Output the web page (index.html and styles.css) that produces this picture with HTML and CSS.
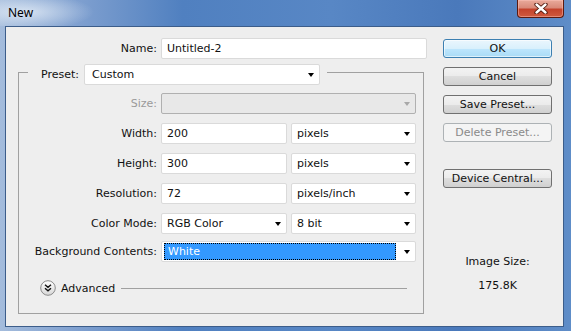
FILE: index.html
```html
<!DOCTYPE html>
<html>
<head>
	<title>New</title>
	<link rel="stylesheet" href="styles.css">
</head>
<body>
	<div class="window">
		<div class="titlebar">
			<span class="title">New</span>
			<span class="close">
				<svg width="14" height="11" viewBox="0 0 14 11">
					<path d="M2.5 1.5 L11.5 9.5 M11.5 1.5 L2.5 9.5" stroke="#4a1408" stroke-width="4.2" stroke-linecap="round"/>
					<path d="M2.5 1.5 L11.5 9.5 M11.5 1.5 L2.5 9.5" stroke="#fff" stroke-width="2.4" stroke-linecap="round"/>
				</svg>
			</span>
		</div>

		<div class="client">
			<div class="main">
				<div class="name_row">
					<label class="lbl name_lbl">Name:</label>
					<div class="field name_field">Untitled-2</div>
				</div>

				<fieldset class="group">
					<legend class="preset">
						<span>Preset:</span>
						<div class="select preset_select"><span>Custom</span><i class="arrow"></i></div>
					</legend>

					<div class="grid">
						<span class="lbl off">Size:</span>
						<div class="select wide disabled"><span></span><i class="arrow"></i></div>

						<span class="lbl">Width:</span>
						<div class="field">200</div>
						<div class="select"><span>pixels</span><i class="arrow"></i></div>

						<span class="lbl">Height:</span>
						<div class="field">300</div>
						<div class="select"><span>pixels</span><i class="arrow"></i></div>

						<span class="lbl">Resolution:</span>
						<div class="field">72</div>
						<div class="select"><span>pixels/inch</span><i class="arrow"></i></div>

						<span class="lbl">Color Mode:</span>
						<div class="select"><span>RGB Color</span><i class="arrow"></i></div>
						<div class="select"><span>8 bit</span><i class="arrow"></i></div>

						<span class="lbl last_row">Background Contents:</span>
						<div class="select wide last_row bg_select"><span class="focus">White</span><i class="arrow"></i></div>
					</div>

					<div class="advanced">
						<svg class="adv_icon" width="16" height="16" viewBox="0 0 16 16">
							<defs>
								<linearGradient id="knob" x1="0" y1="0" x2="0" y2="1">
									<stop offset="0" stop-color="#ffffff"/>
									<stop offset="1" stop-color="#d6d6d6"/>
								</linearGradient>
							</defs>
							<circle cx="8" cy="8" r="7.3" fill="url(#knob)" stroke="#8a8a8a"/>
							<path d="M5 4.8 L8 7.3 L11 4.8 M5 8.3 L8 10.8 L11 8.3" fill="none" stroke="#111" stroke-width="1.4"/>
						</svg>
						<span>Advanced</span>
						<span class="rule"></span>
					</div>
				</fieldset>
			</div>

			<div class="side">
				<div class="btn default">OK</div>
				<div class="btn">Cancel</div>
				<div class="btn">Save Preset...</div>
				<div class="btn disabled">Delete Preset...</div>
				<div class="btn device">Device Central...</div>

				<div class="info info_label">Image Size:</div>
				<div class="info info_value">175.8K</div>
			</div>
		</div>
	</div>
</body>
</html>
```

FILE: styles.css
```css
/* New document dialog */

html, body { margin: 0; padding: 0; }
body { width: 571px; height: 331px; overflow: hidden; font-family: "DejaVu Sans", sans-serif; font-size: 11px; color: #111; }

.window {
	width: 571px; height: 331px; display: flex; flex-direction: column; box-sizing: border-box;
	background: linear-gradient(to right, #a4bcdc 0%, #7e9fcf 14%, #5080c0 32%, #5887c5 58%, #4a79bb 80%, #5f8dc8 100%);
}

/* title bar */
.titlebar { height: 26px; display: flex; align-items: flex-start; flex-shrink: 0;
	background: radial-gradient(ellipse 70px 18px at 24px 12px, rgba(235, 242, 250, .75), rgba(235, 242, 250, 0)); }
.title { margin: 5px 0 0 8px; font-family: "Noto Sans", sans-serif; font-size: 12px; line-height: 16px; color: #000; }
.close {
	margin-left: auto; margin-right: 7px; width: 45px; height: 17px; display: flex; align-items: center; justify-content: center;
	border: 1px solid #5b1a10; border-top: 0; border-radius: 0 0 4px 4px;
	background: linear-gradient(#e9aa9b 0%, #d98a79 45%, #c4432c 55%, #cf5a3e 100%);
	box-shadow: inset 0 0 0 1px rgba(255, 200, 190, .45);
}

/* client area */
.client {
	flex: 1; margin: 0 7px 4px 5px; border: 1px solid #3c5d8a; background: #eeeeee;
	display: flex; padding: 11px 11px 0 12px;
}
.main { width: 409px; }
.side { width: 109px; margin-left: 16px; display: flex; flex-direction: column; }

.lbl { text-align: right; line-height: 21px; white-space: nowrap; }
.lbl.off { color: #9a9a9a; }

.name_row { display: flex; height: 21px; }
.name_lbl { width: 139px; margin-right: 4px; }
.name_field { flex: 1; }

.field, .select {
	height: 21px; box-sizing: border-box; background: #fff; border: 1px solid #dadada; border-radius: 2px;
	line-height: 19px; padding-left: 5px; white-space: nowrap;
}
.select { display: flex; align-items: center; justify-content: space-between; padding-right: 5px; }
.arrow { width: 0; height: 0; border-left: 3.5px solid transparent; border-right: 3.5px solid transparent; border-top: 4px solid #000; }
.select.disabled { background: #e8e8e8; border-color: #b0b0b0; }
.select.disabled .arrow { border-top-color: #a8a8a8; }

/* preset group */
.group { margin: 1px 3px 0 0; padding: 8px 0 17px 0; border: 1px solid #a0a0a0; border-radius: 0; min-width: 0; }
.preset { margin-left: 9px; padding: 4px 7px 0 13px; display: flex; align-items: center; }
.preset_select { width: 236px; margin-left: 5px; padding-left: 7px; }

.grid { display: grid; grid-template-columns: 138px 126px 125px; grid-auto-rows: 21px; column-gap: 4px; row-gap: 9px; }
.wide { grid-column: span 2; }
.last_row { margin-top: -2px; height: 21px; }
.bg_select { padding-left: 2px; padding-right: 5px; }
.focus { flex: 1; margin-right: 8px; height: 17px; line-height: 17px; padding-left: 4px;
	background: #3399ff; color: #fff; outline: 1px dotted #000; outline-offset: -1px; }

.advanced { display: flex; align-items: center; height: 16px; margin: 16px 16px 0 21px; }
.adv_icon { flex-shrink: 0; margin-right: 5px; }
.rule { flex: 1; margin-left: 6px; border-top: 1px solid #a0a0a0; }

/* buttons */
.btn {
	height: 19px; box-sizing: border-box; margin-top: 9px; border: 1px solid #707070; border-radius: 3px;
	background: linear-gradient(#f3f3f3 0%, #ebebeb 50%, #dedede 50%, #d0d0d0 100%);
	text-align: center; line-height: 17px; white-space: nowrap;
}
.btn:first-child { margin-top: 1px; }
.btn.default { border-color: #3c7fb1; background: linear-gradient(#eaf6fd 0%, #d9f0fc 50%, #bee6fd 50%, #a9dbf6 100%);
	box-shadow: inset 0 0 0 1px rgba(255, 255, 255, .6); }
.btn.disabled { border-color: #adb2b5; background: #f4f4f4; color: #8a8a8a; }
.btn.device { margin-top: 27px; }

.info { text-align: center; line-height: 14px; }
.info_label { margin-top: 67px; }
.info_value { margin-top: 10px; }
```
